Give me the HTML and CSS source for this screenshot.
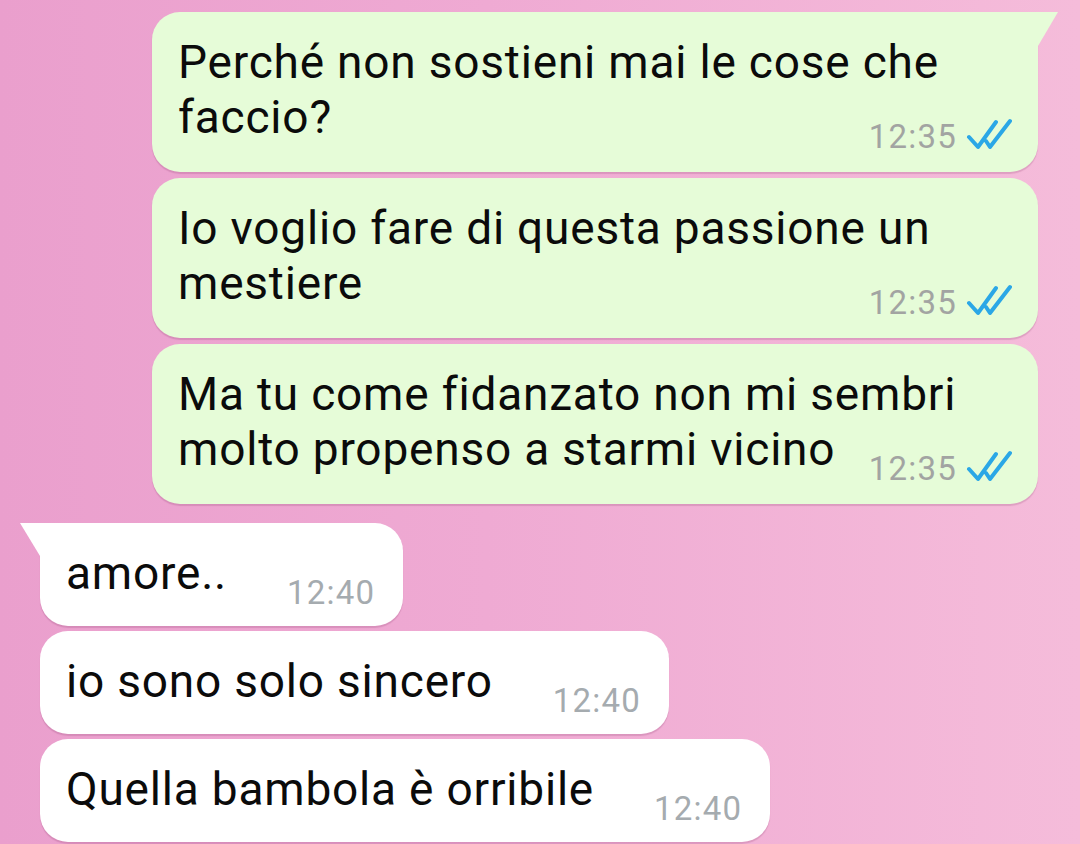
FILE: index.html
```html
<!DOCTYPE html>
<html lang="it">
<head>
  <meta charset="UTF-8" />
  <meta name="viewport" content="width=device-width, initial-scale=1.0" />
  <title>Chat</title>
  <link rel="stylesheet" href="styles.css">
</head>
<body>
  <div class="chat">
    <div class="group out">
      <div class="bubble first">
        <p class="text">Perché non sostieni mai le cose che faccio?<span class="meta"><span class="time">12:35</span><svg class="ticks" viewBox="0 0 46 34" width="46" height="34"><path d="M3 20 L12 30 L30 5 M20 24 L24 30 L44 4" /></svg></span></p>
      </div>
      <div class="bubble">
        <p class="text">Io voglio fare di questa passione un mestiere<span class="meta"><span class="time">12:35</span><svg class="ticks" viewBox="0 0 46 34" width="46" height="34"><path d="M3 20 L12 30 L30 5 M20 24 L24 30 L44 4" /></svg></span></p>
      </div>
      <div class="bubble">
        <p class="text">Ma tu come fidanzato non mi sembri molto propenso a starmi vicino<span class="meta"><span class="time">12:35</span><svg class="ticks" viewBox="0 0 46 34" width="46" height="34"><path d="M3 20 L12 30 L30 5 M20 24 L24 30 L44 4" /></svg></span></p>
      </div>
    </div>

    <div class="group in">
      <div class="bubble first">
        <p class="text">amore..<span class="meta"><span class="time">12:40</span></span></p>
      </div>
      <div class="bubble">
        <p class="text">io sono solo sincero<span class="meta"><span class="time">12:40</span></span></p>
      </div>
      <div class="bubble">
        <p class="text">Quella bambola è orribile<span class="meta"><span class="time">12:40</span></span></p>
      </div>
    </div>
  </div>
</body>
</html>
```

FILE: styles.css
```css
* {
  box-sizing: border-box;
}

body {
  margin: 0;
  height: 844px;
  overflow: hidden;
  font-family: Roboto, 'Liberation Sans', sans-serif;
  background: linear-gradient(90deg, #ea9fcd 0%, #efaad3 45%, #f5bcda 100%);
}

.chat {
  padding-top: 12px;
  display: flex;
  flex-direction: column;
  gap: 19px;
}

.group {
  display: flex;
  flex-direction: column;
  gap: 6px;
}

.group.in {
  gap: 5px;
}

.bubble {
  position: relative;
  display: flow-root;
  border-radius: 28px;
  box-shadow: 0 2px 1px rgba(120, 40, 90, 0.18);
}

.text {
  margin: 0;
  display: flow-root;
  font-size: 46px;
  line-height: 55px;
  letter-spacing: 0.8px;
  color: #0b0b0b;
}

/* time sits on the last line, pushed to the right and a bit lower */
.meta {
  float: right;
  display: flex;
  align-items: center;
  margin-top: 29px;
  font-size: 33px;
  line-height: 36px;
  letter-spacing: 1.2px;
  white-space: nowrap;
}

/* outgoing */
.out {
  align-items: flex-end;
  padding-right: 42px;
}

.out .bubble {
  width: 886px;
  background: #e6fcd8;
  padding: 23px 26px 17px 26px;
}

.out .bubble.first {
  border-top-right-radius: 0;
}

.out .bubble.first::after {
  content: '';
  position: absolute;
  top: 0;
  right: -20px;
  width: 0;
  height: 0;
  border-top: 34px solid #e6fcd8;
  border-right: 20px solid transparent;
}

.out .meta {
  gap: 9px;
  margin-left: 30px;
  color: #a2a4a2;
}

.ticks {
  fill: none;
  stroke: #2ba7e6;
  stroke-width: 4;
  stroke-linecap: round;
  stroke-linejoin: round;
  margin-top: -6px;
}

/* incoming */
.in {
  align-items: flex-start;
  padding-left: 40px;
}

.in .bubble {
  background: #ffffff;
  padding: 23px 28px 15px 26px;
}

.in .bubble.first {
  border-top-left-radius: 0;
}

.in .bubble.first::after {
  content: '';
  position: absolute;
  top: 0;
  left: -20px;
  width: 0;
  height: 0;
  border-top: 33px solid #ffffff;
  border-left: 20px solid transparent;
}

.in .meta {
  margin-left: 60px;
  color: #a5abaf;
}
```
